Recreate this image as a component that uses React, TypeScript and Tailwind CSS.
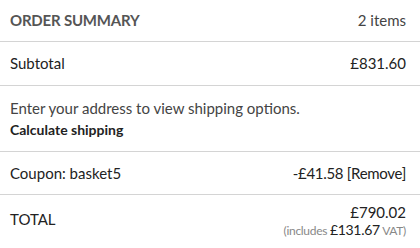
const rows = "border-b border-[#d4d4d4]";

const App = () => {
  return (
    <div className="w-[420px] h-[248px] bg-white text-[#222] overflow-hidden" style={{ fontFamily: "Lato, 'Liberation Sans', sans-serif" }}>
      {/* Header */}
      <div className={`${rows} h-[42px] flex items-center justify-between pl-[10px] pr-[14px]`}>
        <span className="text-[15px] font-bold text-[#555] tracking-[-0.2px]">ORDER SUMMARY</span>
        <span className="text-[15px] text-[#444]">2 items</span>
      </div>

      {/* Subtotal */}
      <div className={`${rows} h-[44px] flex items-center justify-between pl-[10px] pr-[14px] text-[15px]`}>
        <span>Subtotal</span>
        <span>£831.60</span>
      </div>

      {/* Shipping */}
      <div className={`${rows} h-[66px] flex flex-col justify-center pl-[10px] pr-[14px]`}>
        <p className="text-[15px] text-[#444] leading-[20px]">Enter your address to view shipping options.</p>
        <p className="text-[14px] font-bold leading-[20px] mt-[2px]">Calculate shipping</p>
      </div>

      {/* Coupon */}
      <div className={`${rows} h-[43px] flex items-center justify-between pl-[10px] pr-[14px] text-[15px]`}>
        <span>Coupon: basket5</span>
        <span className="tracking-[-0.3px]">-£41.58 [Remove]</span>
      </div>

      {/* Total */}
      <div className="h-[53px] flex items-center justify-between pl-[10px] pr-[14px]">
        <span className="text-[15px] mb-[4px]">TOTAL</span>
        <div className="text-right leading-[18px]">
          <div className="text-[15px]">£790.02</div>
          <div className="text-[12px] text-[#888] tracking-[-0.3px]">
            (includes <span className="text-[14px] text-[#222]">£131.67</span> VAT)
          </div>
        </div>
      </div>
    </div>
  );
};

export default App;
